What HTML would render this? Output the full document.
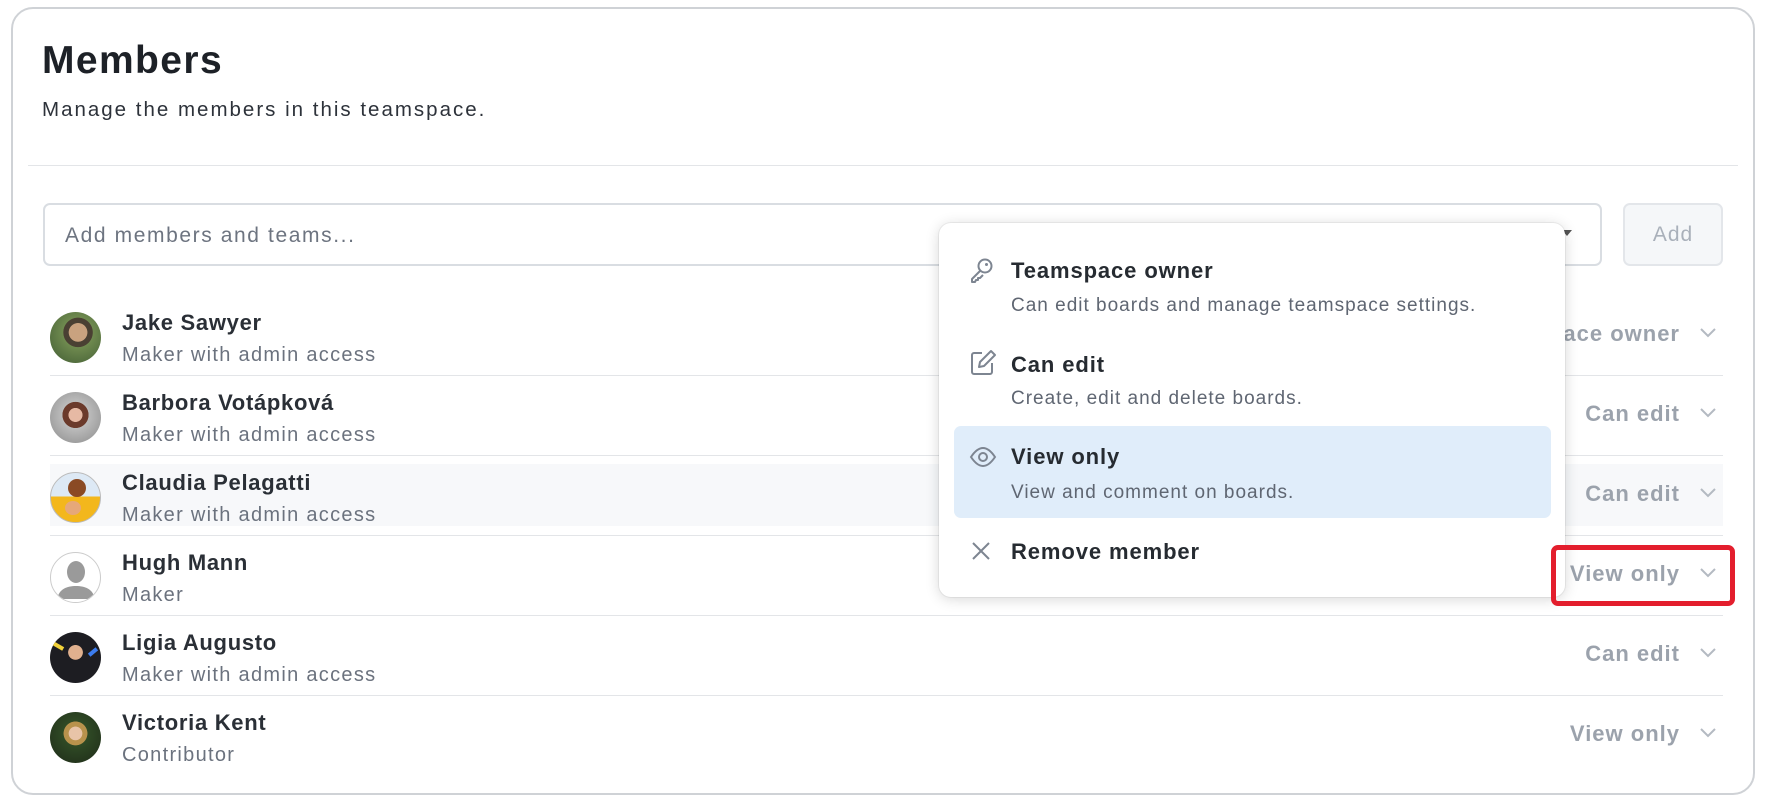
<!DOCTYPE html>
<html><head><meta charset="utf-8"><style>
*{box-sizing:border-box;margin:0;padding:0}
body{width:1766px;height:810px;background:#fff;font-family:"Liberation Sans",sans-serif;position:relative;overflow:hidden;color:#2a2f36}
.card{position:absolute;left:11px;top:7px;width:1744px;height:788px;border:2px solid #cfd2d6;border-radius:22px}
.a{position:absolute}
h1{position:absolute;left:42px;top:39px;font-size:39px;font-weight:700;color:#1d2127;letter-spacing:1.4px}
.sub{left:42px;top:98px;font-size:20.5px;color:#2d323a;letter-spacing:2px}
.div{left:28px;top:165px;width:1710px;height:1px;background:#e3e5e8}
.inp{left:43px;top:203px;width:1559px;height:63px;border:2px solid #d9dde2;border-radius:7px;font-size:21px;color:#6d7480;padding:19px 20px;letter-spacing:1.6px}
.add{left:1623px;top:203px;width:100px;height:63px;border:2px solid #e3e6ea;background:#f5f7f9;border-radius:7px;font-size:21px;color:#a9b0ba;text-align:center;line-height:59px;letter-spacing:1px}
.row{position:absolute;left:50px;width:1673px;height:80px;border-bottom:1.5px solid #e3e5e8}
.av{position:absolute;left:0;top:16px;width:51px;height:51px;border-radius:50%;overflow:hidden}
.nm{position:absolute;left:72px;top:14px;font-size:22px;font-weight:700;color:#2a2f36;letter-spacing:0.7px}
.ds{position:absolute;left:72px;top:48px;font-size:20px;color:#6b727e;letter-spacing:1.3px}
.role{position:absolute;right:43px;top:25px;font-size:22px;font-weight:700;color:#9ba2ac;letter-spacing:1px}
.chev{position:absolute;right:6px;top:31px}
.menu{left:939px;top:223px;width:626px;height:374px;background:#fff;border-radius:12px;box-shadow:0 2px 14px rgba(0,0,0,.16),0 0 0 1px rgba(0,0,0,.05)}
.it{position:absolute;left:72px;font-size:22px;font-weight:700;color:#262b31;letter-spacing:0.9px}
.id{position:absolute;left:72px;font-size:19px;color:#5f6672;letter-spacing:1px}
.ic{position:absolute;left:30px}
</style></head><body>
<div class="card"></div>
<h1>Members</h1>
<div class="a sub">Manage the members in this teamspace.</div>
<div class="a div"></div>
<div class="a inp">Add members and teams...</div>
<div class="a add">Add</div>

<div class="row" style="top:296px">
 <div class="av" style="background:radial-gradient(circle at 55% 40%,#c9a27f 0 22%,#4a4033 23% 35%,#6f8a4f 36%,#3f5a32 100%)"></div>
 <div class="nm">Jake Sawyer</div><div class="ds">Maker with admin access</div>
 <div class="role">Teamspace owner</div>
 <svg class="chev" width="18" height="12" viewBox="0 0 18 12"><path d="M2 2l7 7 7-7" fill="none" stroke="#b4bac2" stroke-width="2"/></svg>
</div>
<div class="row" style="top:376px">
 <div class="av" style="background:radial-gradient(circle at 50% 45%,#e6b9a4 0 18%,#6b3a2b 19% 34%,#bcbcbc 35%,#8a8a8a 100%)"></div>
 <div class="nm">Barbora Votápková</div><div class="ds">Maker with admin access</div>
 <div class="role">Can edit</div>
 <svg class="chev" width="18" height="12" viewBox="0 0 18 12"><path d="M2 2l7 7 7-7" fill="none" stroke="#b4bac2" stroke-width="2"/></svg>
</div>
<div class="row" style="top:456px">
 <div class="a" style="left:0;top:8px;width:1673px;height:62px;background:#f7f8fa"></div>
 <div class="av" style="border:1px solid #bbb;background:linear-gradient(#dde9f5 0 48%,#f3b71c 48%)"><div class="a" style="left:17px;top:6px;width:18px;height:18px;border-radius:50%;background:#8a4a24"></div><div class="a" style="left:14px;top:28px;width:16px;height:14px;border-radius:50%;background:#e6a879"></div></div>
 <div class="nm">Claudia Pelagatti</div><div class="ds">Maker with admin access</div>
 <div class="role">Can edit</div>
 <svg class="chev" width="18" height="12" viewBox="0 0 18 12"><path d="M2 2l7 7 7-7" fill="none" stroke="#b4bac2" stroke-width="2"/></svg>
</div>
<div class="row" style="top:536px">
 <div class="av" style="border:1px solid #ccc;background:#fff"><svg width="51" height="51" viewBox="0 0 51 51"><ellipse cx="25" cy="19" rx="9" ry="11" fill="#9a9a9a"/><path d="M6 46c2-10 10-13 19-13s17 3 19 13z" fill="#9a9a9a"/></svg></div>
 <div class="nm">Hugh Mann</div><div class="ds">Maker</div>
 <div class="role">View only</div>
 <svg class="chev" width="18" height="12" viewBox="0 0 18 12"><path d="M2 2l7 7 7-7" fill="none" stroke="#b4bac2" stroke-width="2"/></svg>
</div>
<div class="row" style="top:616px">
 <div class="av" style="background:radial-gradient(circle at 50% 40%,#e0b08e 0 18%,#1d1d22 19%),#111"><div class="a" style="left:2px;top:12px;width:12px;height:4px;background:#f2d23a;transform:rotate(30deg)"></div><div class="a" style="left:38px;top:18px;width:10px;height:4px;background:#3c7df0;transform:rotate(-40deg)"></div></div>
 <div class="nm">Ligia Augusto</div><div class="ds">Maker with admin access</div>
 <div class="role">Can edit</div>
 <svg class="chev" width="18" height="12" viewBox="0 0 18 12"><path d="M2 2l7 7 7-7" fill="none" stroke="#b4bac2" stroke-width="2"/></svg>
</div>
<div class="row" style="top:696px;border-bottom:none">
 <div class="av" style="background:radial-gradient(circle at 50% 42%,#e8c4a8 0 17%,#b8924c 18% 30%,#2f4a25 31%,#1e2a18 100%)"></div>
 <div class="nm">Victoria Kent</div><div class="ds">Contributor</div>
 <div class="role">View only</div>
 <svg class="chev" width="18" height="12" viewBox="0 0 18 12"><path d="M2 2l7 7 7-7" fill="none" stroke="#b4bac2" stroke-width="2"/></svg>
</div>

<svg class="a" style="left:1560px;top:228px" width="14" height="10" viewBox="0 0 14 10"><path d="M2 2h10l-5 6z" fill="#555"/></svg>

<div class="a menu">
 <svg class="ic" style="top:34px" width="26" height="28" viewBox="0 0 26 28"><circle cx="16" cy="9" r="6.5" fill="none" stroke="#7d8591" stroke-width="2"/><circle cx="17.5" cy="7.5" r="1.5" fill="#7d8591"/><path d="M11.5 13.5L3 22v3h3l1-2h2v-2h2l3-3" fill="none" stroke="#7d8591" stroke-width="2" stroke-linejoin="round"/></svg>
 <div class="it" style="top:35px">Teamspace owner</div>
 <div class="id" style="top:72px">Can edit boards and manage teamspace settings.</div>
 <svg class="ic" style="top:126px" width="28" height="28" viewBox="0 0 28 28"><path d="M13 4H5a2 2 0 0 0-2 2v17a2 2 0 0 0 2 2h16a2 2 0 0 0 2-2v-9" fill="none" stroke="#7d8591" stroke-width="2"/><path d="M22 2l4 4-11 11-5 1 1-5z" fill="none" stroke="#7d8591" stroke-width="2" stroke-linejoin="round"/></svg>
 <div class="it" style="top:129px">Can edit</div>
 <div class="id" style="top:165px">Create, edit and delete boards.</div>
 <div class="a" style="left:15px;top:203px;width:597px;height:92px;background:#e0edfa;border-radius:7px"></div>
 <svg class="ic" style="top:222px" width="28" height="24" viewBox="0 0 28 24"><path d="M2 12c4-6 8-9 12-9s8 3 12 9c-4 6-8 9-12 9S6 18 2 12z" fill="none" stroke="#7d8591" stroke-width="2"/><circle cx="14" cy="12" r="4" fill="none" stroke="#7d8591" stroke-width="2"/></svg>
 <div class="it" style="top:221px">View only</div>
 <div class="id" style="top:259px">View and comment on boards.</div>
 <svg class="ic" style="top:318px;left:32px" width="20" height="20" viewBox="0 0 20 20"><path d="M2 2l16 16M18 2L2 18" stroke="#7d8591" stroke-width="2"/></svg>
 <div class="it" style="top:316px">Remove member</div>
</div>

<div class="a" style="left:1551px;top:545px;width:184px;height:61px;border:5px solid #e31e2d;border-radius:7px"></div>
</body></html>
